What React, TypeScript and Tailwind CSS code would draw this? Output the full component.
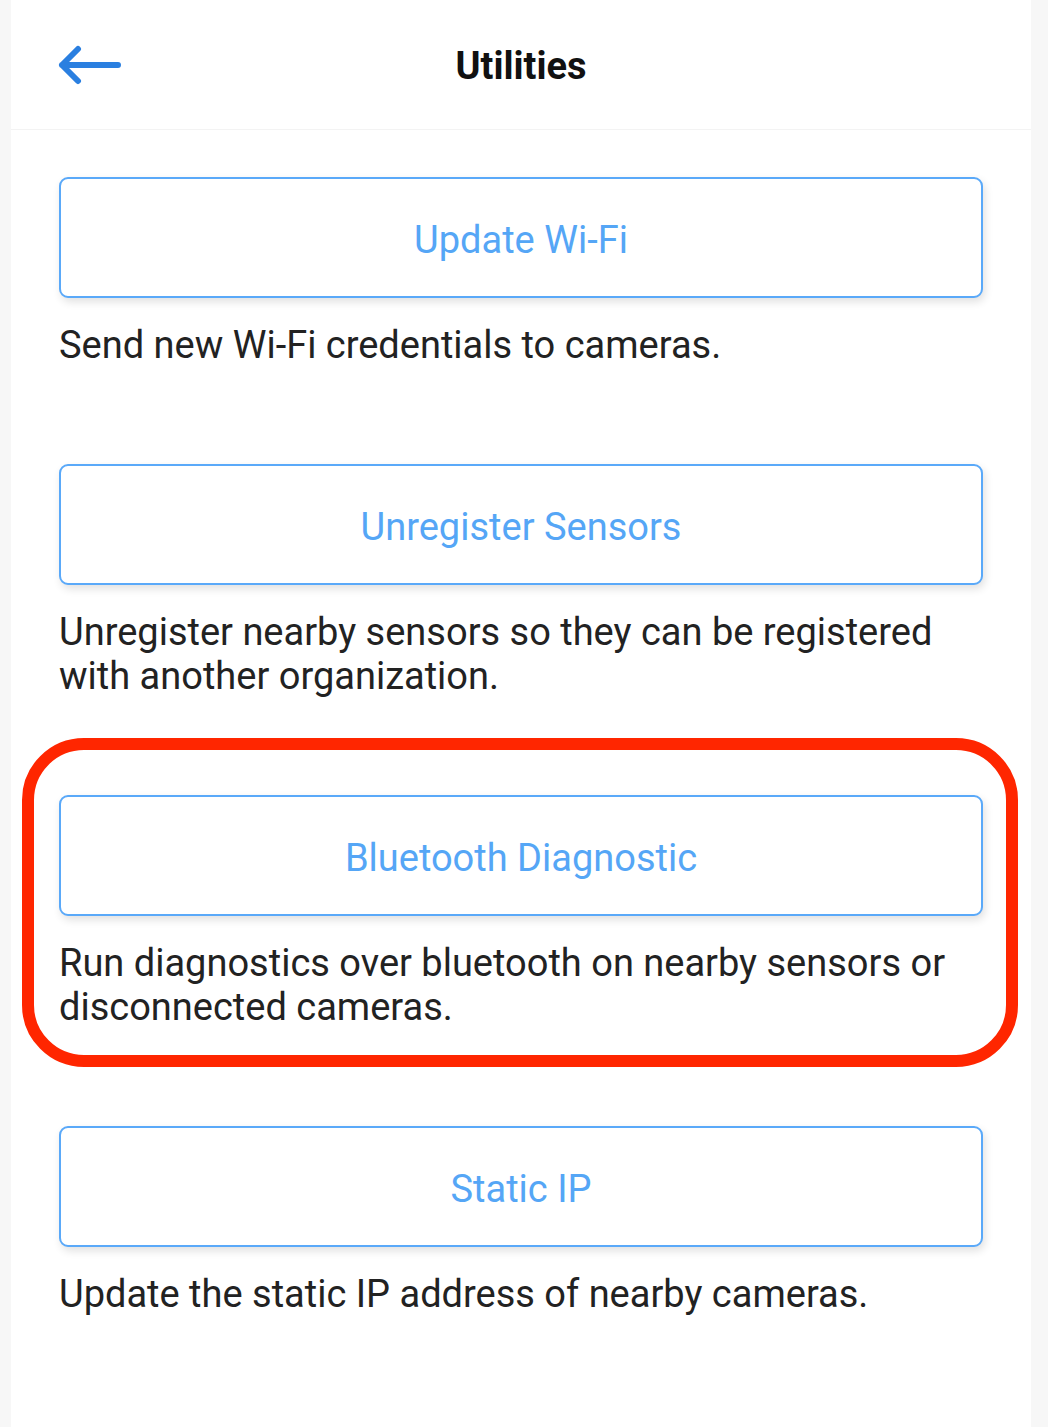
const items = [
  { label: 'Update Wi-Fi', text: 'Send new Wi-Fi credentials to cameras.' },
  {
    label: 'Unregister Sensors',
    text: 'Unregister nearby sensors so they can be registered with another organization.',
  },
  {
    label: 'Bluetooth Diagnostic',
    text: 'Run diagnostics over bluetooth on nearby sensors or disconnected cameras.',
    highlight: true,
  },
  { label: 'Static IP', text: 'Update the static IP address of nearby cameras.' },
];

export default function App() {
  return (
    <div className="min-h-screen bg-[#f7f7f7] font-['Roboto',sans-serif]">
      <div className="ml-[11px] w-[1020px] min-h-[1427px] bg-white">
        {/* header */}
        <header className="relative h-[130px] flex items-center justify-center border-b border-[#f3f3f3]">
          <button className="absolute left-[47px] top-[44px] p-0">
            <svg width="64" height="42" viewBox="0 0 64 42" fill="none">
              <path
                d="M4 21 H60 M4 21 L20 5 M4 21 L20 37"
                stroke="#2a7fe0"
                strokeWidth="6"
                strokeLinecap="round"
                strokeLinejoin="round"
              />
            </svg>
          </button>
          <h1 className="text-[38px] font-bold text-[#111] mt-[4px]">Utilities</h1>
        </header>

        <main className="px-[48px] pt-[47px] flex flex-col gap-[97px]">
          {items.map((item) => (
            <section key={item.label} className="relative">
              {item.highlight && (
                <div className="absolute top-[-57px] left-[-37px] right-[-35px] bottom-[-38px] border-[12px] border-[#ff2600] rounded-[62px] pointer-events-none" />
              )}
              <button className="w-full h-[121px] pt-[5px] rounded-[9px] border-[2.5px] border-[#5aa9f9] bg-white shadow-[2px_4px_8px_rgba(0,0,0,0.12)] text-[38px] text-[#55a6f6]">
                {item.label}
              </button>
              <p className="mt-[25px] text-[38px] leading-[44px] text-[#222] pr-[30px]">
                {item.text}
              </p>
            </section>
          ))}
        </main>
      </div>
    </div>
  );
}
